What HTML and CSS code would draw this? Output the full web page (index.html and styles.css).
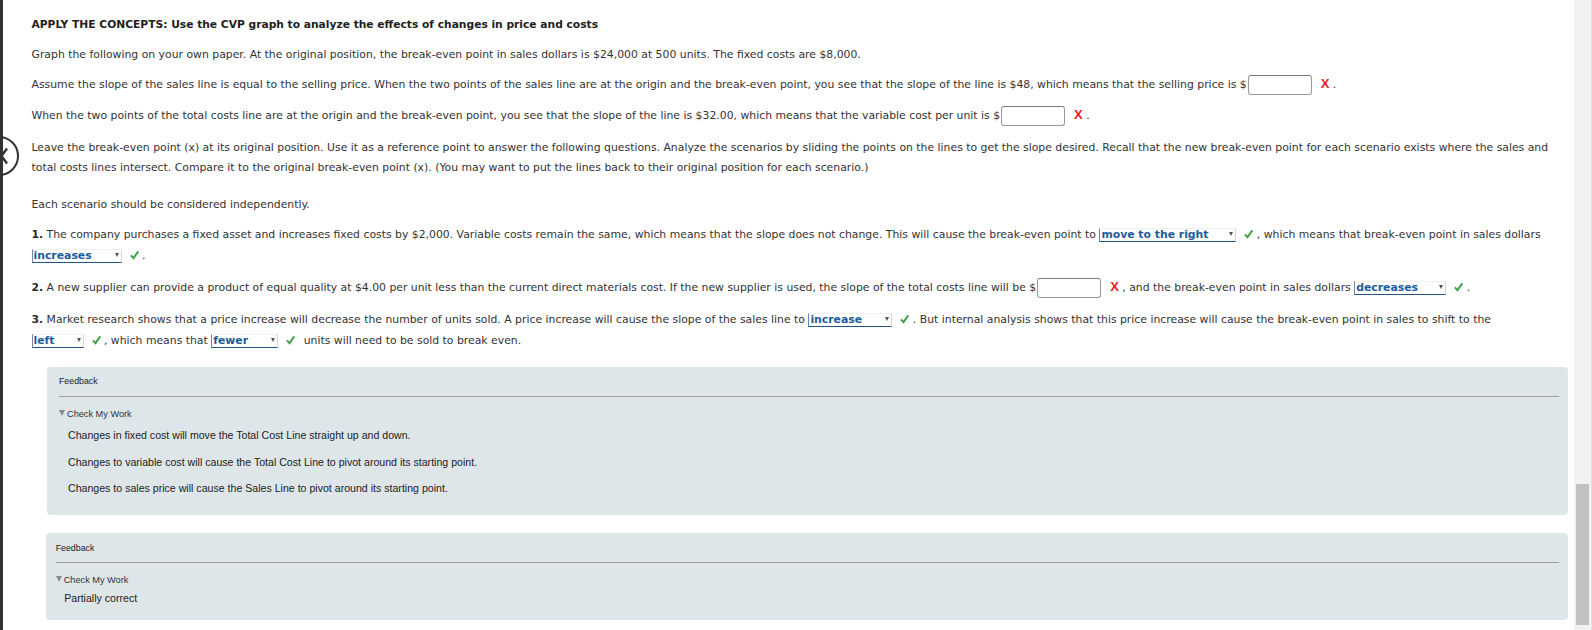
FILE: index.html
```html
<!DOCTYPE html>
<html lang="en">
<head>
<meta charset="utf-8">
<title>Apply the Concepts: CVP graph</title>
<link rel="stylesheet" href="styles.css">
</head>
<body>
<div class="page">
  <div class="edge"></div>
  <svg class="back" width="22" height="46" viewBox="0 0 22 46" aria-hidden="true">
    <circle cx="-1" cy="22" r="19" fill="#fff" stroke="#333" stroke-width="2"/>
    <polyline points="7,14.5 1.5,22 7,29.5" fill="none" stroke="#333" stroke-width="2.4"/>
  </svg>
  <main class="main">
    <p class="txt title">APPLY THE CONCEPTS: Use the CVP graph to analyze the effects of changes in price and costs</p>
    <p class="txt p1">Graph the following on your own paper. At the original position, the break-even point in sales dollars is $24,000 at 500 units. The fixed costs are $8,000.</p>
    <p class="txt p2">Assume the slope of the sales line is equal to the selling price. When the two points of the sales line are at the origin and the break-even point, you see that the slope of the line is $48, which means that the selling price is $<input class="inp" type="text"><span class="bad">X</span> .</p>
    <p class="txt p3">When the two points of the total costs line are at the origin and the break-even point, you see that the slope of the line is $32.00, which means that the variable cost per unit is $<input class="inp" type="text"><span class="bad">X</span> .</p>
    <p class="txt p4">Leave the break-even point (x) at its original position. Use it as a reference point to answer the following questions. Analyze the scenarios by sliding the points on the lines to get the slope desired. Recall that the new break-even point for each scenario exists where the sales and<br>total costs lines intersect. Compare it to the original break-even point (x). (You may want to put the lines back to their original position for each scenario.)</p>
    <p class="txt p5">Each scenario should be considered independently.</p>
    <p class="txt q q1"><b>1.</b> The company purchases a fixed asset and increases fixed costs by $2,000. Variable costs remain the same, which means that the slope does not change. This will cause the break-even point to <span class="sel w-right"><span>move to the right</span><span class="caret"></span></span><svg class="ok" viewBox="0 0 10 10"><path d="M1 5.3 L3.9 8.5 L9.2 1"/></svg> , which means that break-even point in sales dollars<br><span class="sel w-inc"><span>increases</span><span class="caret"></span></span><svg class="ok" viewBox="0 0 10 10"><path d="M1 5.3 L3.9 8.5 L9.2 1"/></svg> .</p>
    <p class="txt q2"><b>2.</b> A new supplier can provide a product of equal quality at $4.00 per unit less than the current direct materials cost. If the new supplier is used, the slope of the total costs line will be $<input class="inp" type="text"><span class="bad">X</span> , and the break-even point in sales dollars <span class="sel w-dec"><span>decreases</span><span class="caret"></span></span><svg class="ok" viewBox="0 0 10 10"><path d="M1 5.3 L3.9 8.5 L9.2 1"/></svg> .</p>
    <p class="txt q q3"><b>3.</b> Market research shows that a price increase will decrease the number of units sold. A price increase will cause the slope of the sales line to <span class="sel w-incr"><span>increase</span><span class="caret"></span></span><svg class="ok" viewBox="0 0 10 10"><path d="M1 5.3 L3.9 8.5 L9.2 1"/></svg> . But internal analysis shows that this price increase will cause the break-even point in sales to shift to the<br><span class="sel w-left"><span>left</span><span class="caret"></span></span><svg class="ok" viewBox="0 0 10 10"><path d="M1 5.3 L3.9 8.5 L9.2 1"/></svg> , which means that <span class="sel w-few"><span>fewer</span><span class="caret"></span></span><svg class="ok ok-wide" viewBox="0 0 10 10"><path d="M1 5.3 L3.9 8.5 L9.2 1"/></svg> units will need to be sold to break even.</p>

    <section class="fb fb1">
      <div class="fb-head">Feedback</div>
      <div class="fb-toggle"><span class="tri"></span>Check My Work</div>
      <p class="fb-line first">Changes in fixed cost will move the Total Cost Line straight up and down.</p>
      <p class="fb-line">Changes to variable cost will cause the Total Cost Line to pivot around its starting point.</p>
      <p class="fb-line">Changes to sales price will cause the Sales Line to pivot around its starting point.</p>
    </section>

    <section class="fb fb2">
      <div class="fb-head">Feedback</div>
      <div class="fb-toggle"><span class="tri"></span>Check My Work</div>
      <p class="fb-line first">Partially correct</p>
    </section>
  </main>
  <div class="scroll"><div class="thumb"></div></div>
</div>
</body>
</html>
```

FILE: styles.css
```css
html, body {
  margin: 0;
  padding: 0;
  height: 100%;
  overflow: hidden;
  background: #fff;
}

.page {
  display: flex;
  height: 630px;
  position: relative;
}

.edge {
  width: 3px;
  flex: none;
  background: #333;
  position: relative;
  z-index: 2;
}

.back {
  position: absolute;
  left: 0;
  top: 134px;
  z-index: 1;
}

.main {
  flex: 1;
  min-width: 0;
  padding: 15px 6px 0 28.5px;
  font-family: "DejaVu Sans", Verdana, sans-serif;
  font-size: 10.85px;
  color: #333;
}

.txt {
  margin: 0;
  line-height: 19px;
  white-space: nowrap;
}

.title {
  font-weight: bold;
  color: #1e1e1e;
  font-size: 10.7px;
}

.p1 { margin-top: 11px; }
.p2 { margin-top: 10px; line-height: 22px; }
.p3 { margin-top: 9px; line-height: 22px; }
.p4 { margin-top: 11px; line-height: 19.5px; }
.p5 { margin-top: 17.5px; }
.q { line-height: 21px; }
.q1 { margin-top: 10.5px; }
.q2 { margin-top: 11px; line-height: 22px; }
.q3 { margin-top: 10px; }

.txt b { color: #2a2a2a; }

.inp {
  box-sizing: border-box;
  width: 64px;
  height: 20px;
  margin: 0 0 0 1px;
  padding: 0;
  border: 1px solid #999;
  border-top-color: #7a7a7a;
  border-radius: 3px;
  background: #fff;
  vertical-align: middle;
  font: inherit;
}

.bad {
  display: inline-block;
  margin-left: 9px;
  font-family: "Liberation Sans", Arial, sans-serif;
  font-weight: bold;
  font-size: 13px;
  color: #ec1c24;
  line-height: 10px;
}

.sel {
  display: inline-flex;
  justify-content: space-between;
  align-items: flex-start;
  box-sizing: border-box;
  height: 14px;
  padding: 0 2px 0 1px;
  border-left: 1px solid #6a86a3;
  border-bottom: 1px solid #24548a;
  border-top: 1px solid #efefef;
  border-right: 1px solid #d6d6d6;
  font-weight: bold;
  color: #1b5c9c;
  line-height: 12px;
  vertical-align: baseline;
}

.caret {
  width: 0;
  height: 0;
  margin-top: 3px;
  border-left: 2.5px solid transparent;
  border-right: 2.5px solid transparent;
  border-top: 4px solid #555;
}

.w-right { width: 137px; }
.w-inc { width: 90px; }
.w-dec { width: 92px; }
.w-incr { width: 84px; }
.w-left { width: 52px; }
.w-few { width: 67px; }

.ok {
  width: 9px;
  height: 10px;
  margin: 0 0 0 8px;
  vertical-align: -1px;
  overflow: visible;
}
.ok path {
  fill: none;
  stroke: #3f9f43;
  stroke-width: 2.1;
}
.ok-wide { margin-right: 5px; }

.fb {
  box-sizing: border-box;
  background: #dee6e9;
  border-radius: 4px;
  font-family: "Liberation Sans", Arial, sans-serif;
  color: #222;
}

.fb1 {
  margin: 16px 0 0 15.5px;
  height: 147.5px;
  padding: 7.7px 9.5px 0 12px;
}

.fb2 {
  margin: 18.5px 0 0 14.2px;
  height: 86.5px;
  padding: 8.5px 9.5px 0 10px;
}

.fb-head {
  font-size: 8.8px;
  line-height: 12px;
  padding-bottom: 9.6px;
  border-bottom: 1px solid #9aa0a3;
}
.fb2 .fb-head { padding-bottom: 8.8px; }

.fb-toggle {
  display: flex;
  align-items: center;
  margin-top: 10.5px;
  font-size: 9.2px;
  line-height: 12px;
  color: #333;
}

.tri {
  width: 0;
  height: 0;
  margin: 0 2px 2px 0;
  border-left: 3px solid transparent;
  border-right: 3px solid transparent;
  border-top: 6px solid #8c8c8c;
}

.fb-line {
  margin: 12.5px 0 0 9px;
  font-size: 10.6px;
  line-height: 14px;
}
.fb1 .fb-line.first { margin-top: 8.7px; }
.fb2 .fb-line.first { margin-top: 5.3px; margin-left: 8.5px; }

.scroll {
  width: 18px;
  flex: none;
  background: #f1f1f1;
  border-right: 1px solid #e2e2e2;
  box-sizing: border-box;
}

.thumb {
  margin: 484px 0 0 2px;
  width: 13px;
  height: 141px;
  background: #c1c1c1;
}
```
